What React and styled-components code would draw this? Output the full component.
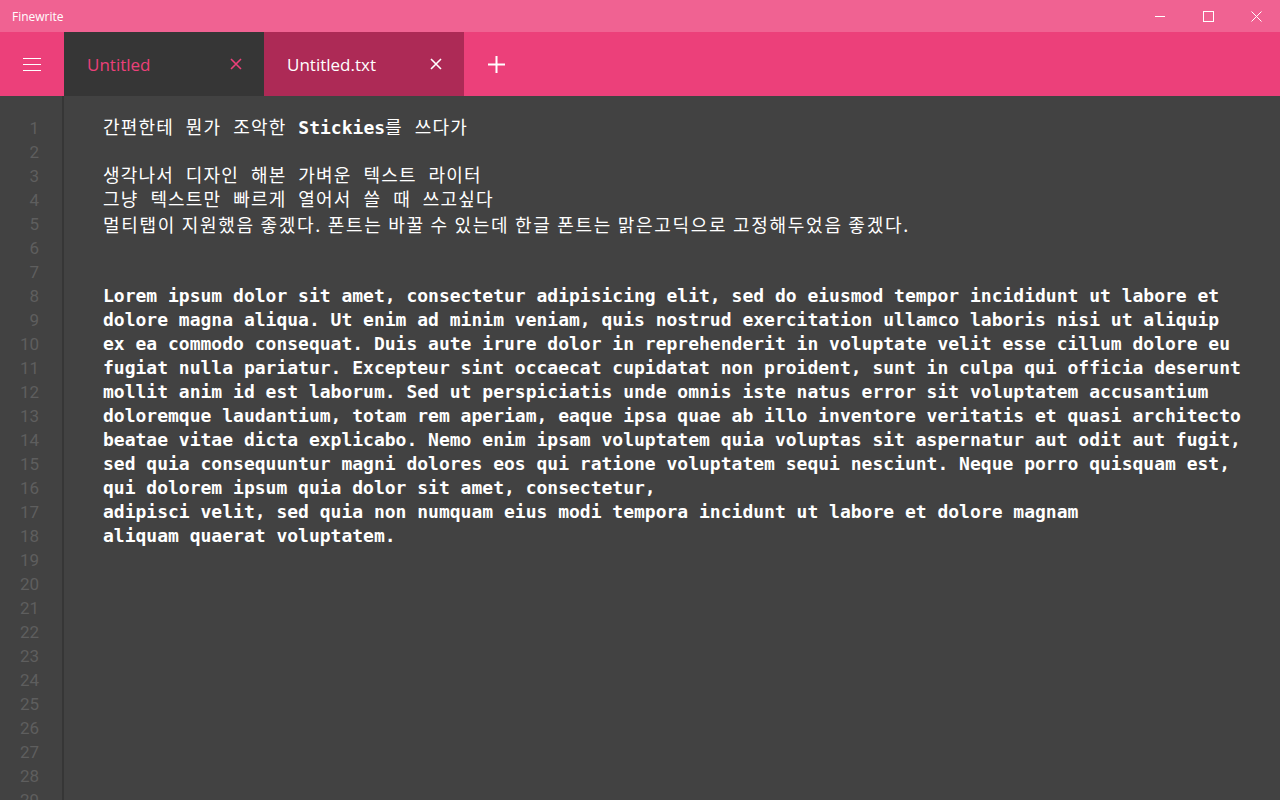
import React from "react";
import styled, { createGlobalStyle } from "styled-components";

const Global = createGlobalStyle`
  html, body { margin: 0; padding: 0; height: 100%; background: #424242; }
  #root { height: 100%; }
  * { box-sizing: border-box; }
`;

const Window = styled.div`
  width: 1280px;
  height: 800px;
  display: flex;
  flex-direction: column;
  overflow: hidden;
  background: #424242;
`;

const TitleBar = styled.div`
  height: 32px;
  flex: 0 0 32px;
  background: #f06292;
  display: flex;
  align-items: center;
  color: #fff;
  font-family: "Segoe UI", "Open Sans", "Noto Sans", sans-serif;
  font-size: 12px;
`;

const AppName = styled.div`
  flex: 1;
  padding-left: 12px;
`;

const WinButton = styled.div`
  width: 48px;
  height: 32px;
  display: flex;
  align-items: center;
  justify-content: center;
`;

const TabBar = styled.div`
  height: 64px;
  flex: 0 0 64px;
  background: #ec407a;
  display: flex;
  font-family: "Segoe UI", "Open Sans", "Noto Sans", sans-serif;
`;

const MenuButton = styled.div`
  width: 64px;
  display: flex;
  align-items: center;
  justify-content: center;
`;

const Tab = styled.div`
  width: 200px;
  display: flex;
  align-items: center;
  padding: 0 22px 0 23px;
  background: ${(p) => (p.active ? "#363636" : "#ad2a56")};
  color: ${(p) => (p.active ? "#ec407a" : "#ffffff")};
  font-size: 17px;
`;

const TabTitle = styled.span`
  flex: 1;
`;

const AddButton = styled.div`
  width: 64px;
  display: flex;
  align-items: center;
  justify-content: center;
`;

const Editor = styled.div`
  flex: 1;
  display: flex;
  overflow: hidden;
`;

const Gutter = styled.div`
  width: 64px;
  flex: 0 0 64px;
  border-right: 2px solid #363636;
  padding: 20px 23px 0 0;
  text-align: right;
  font-family: Roboto, "Noto Sans", sans-serif;
  font-size: 17px;
  color: #5e5e5e;
`;

const Num = styled.div`
  height: 24px;
  line-height: 24px;
`;

const Text = styled.div`
  flex: 1;
  padding: 20px 0 0 39px;
  font-family: "DejaVu Sans Mono", "Noto Sans CJK KR", monospace;
  font-size: 18px;
  color: #ffffff;
`;

const Line = styled.div`
  height: 24px;
  line-height: 24px;
  white-space: pre;
  font-weight: ${(p) => (p.bold ? 700 : 400)};
  letter-spacing: ${(p) => (p.hangul ? "1.15px" : "0")};
`;

const ProseLine = styled(Line)`
  font-family: "Noto Sans CJK KR", "Noto Sans", sans-serif;
  font-size: 18px;
  letter-spacing: 1.7px;
`;

const Strong = styled.span`
  font-weight: 700;
  letter-spacing: 0;
`;

const Glyph = ({ children, w = 12, h = 12 }) => (
  <svg width={w} height={h} viewBox={`0 0 ${w} ${h}`} fill="none">
    {children}
  </svg>
);

const lorem = [
  "Lorem ipsum dolor sit amet, consectetur adipisicing elit, sed do eiusmod tempor incididunt ut labore et",
  "dolore magna aliqua. Ut enim ad minim veniam, quis nostrud exercitation ullamco laboris nisi ut aliquip",
  "ex ea commodo consequat. Duis aute irure dolor in reprehenderit in voluptate velit esse cillum dolore eu",
  "fugiat nulla pariatur. Excepteur sint occaecat cupidatat non proident, sunt in culpa qui officia deserunt",
  "mollit anim id est laborum. Sed ut perspiciatis unde omnis iste natus error sit voluptatem accusantium",
  "doloremque laudantium, totam rem aperiam, eaque ipsa quae ab illo inventore veritatis et quasi architecto",
  "beatae vitae dicta explicabo. Nemo enim ipsam voluptatem quia voluptas sit aspernatur aut odit aut fugit,",
  "sed quia consequuntur magni dolores eos qui ratione voluptatem sequi nesciunt. Neque porro quisquam est,",
  "qui dolorem ipsum quia dolor sit amet, consectetur,",
  "adipisci velit, sed quia non numquam eius modi tempora incidunt ut labore et dolore magnam",
  "aliquam quaerat voluptatem.",
];

export default function App() {
  const numbers = Array.from({ length: 30 }, (_, i) => i + 1);
  return (
    <Window>
      <Global />
      <TitleBar>
        <AppName>Finewrite</AppName>
        <WinButton>
          <Glyph w={10} h={10}>
            <path d="M0 5.5h10" stroke="#fff" strokeWidth="1" />
          </Glyph>
        </WinButton>
        <WinButton>
          <Glyph w={11} h={11}>
            <rect x="0.5" y="0.5" width="10" height="10" stroke="#fff" strokeWidth="1" />
          </Glyph>
        </WinButton>
        <WinButton>
          <Glyph w={11} h={11}>
            <path d="M0.5 0.5l10 10M10.5 0.5l-10 10" stroke="#fff" strokeWidth="1" />
          </Glyph>
        </WinButton>
      </TitleBar>

      <TabBar>
        <MenuButton>
          <Glyph w={18} h={13}>
            <path d="M0 0.5h18M0 6.5h18M0 12.5h18" stroke="#fff" strokeWidth="1" />
          </Glyph>
        </MenuButton>
        <Tab active>
          <TabTitle>Untitled</TabTitle>
          <Glyph>
            <path d="M1 1l10 10M11 1L1 11" stroke="#ec407a" strokeWidth="1.6" />
          </Glyph>
        </Tab>
        <Tab>
          <TabTitle>Untitled.txt</TabTitle>
          <Glyph>
            <path d="M1 1l10 10M11 1L1 11" stroke="#fff" strokeWidth="1.6" />
          </Glyph>
        </Tab>
        <AddButton>
          <Glyph w={17} h={17}>
            <path d="M8.5 0v17M0 8.5h17" stroke="#fff" strokeWidth="2" />
          </Glyph>
        </AddButton>
      </TabBar>

      <Editor>
        <Gutter>
          {numbers.map((n) => (
            <Num key={n}>{n}</Num>
          ))}
        </Gutter>
        <Text>
          <Line hangul>
            간편한테 뭔가 조악한 <Strong>Stickies</Strong>를 쓰다가
          </Line>
          <Line />
          <Line hangul>생각나서 디자인 해본 가벼운 텍스트 라이터</Line>
          <Line hangul>그냥 텍스트만 빠르게 열어서 쓸 때 쓰고싶다</Line>
          <ProseLine>
            멀티탭이 지원했음 좋겠다. 폰트는 바꿀 수 있는데 한글 폰트는 맑은고딕으로 고정해두었음 좋겠다.
          </ProseLine>
          <Line />
          <Line />
          {lorem.map((l, i) => (
            <Line bold key={i}>
              {l}
            </Line>
          ))}
        </Text>
      </Editor>
    </Window>
  );
}
